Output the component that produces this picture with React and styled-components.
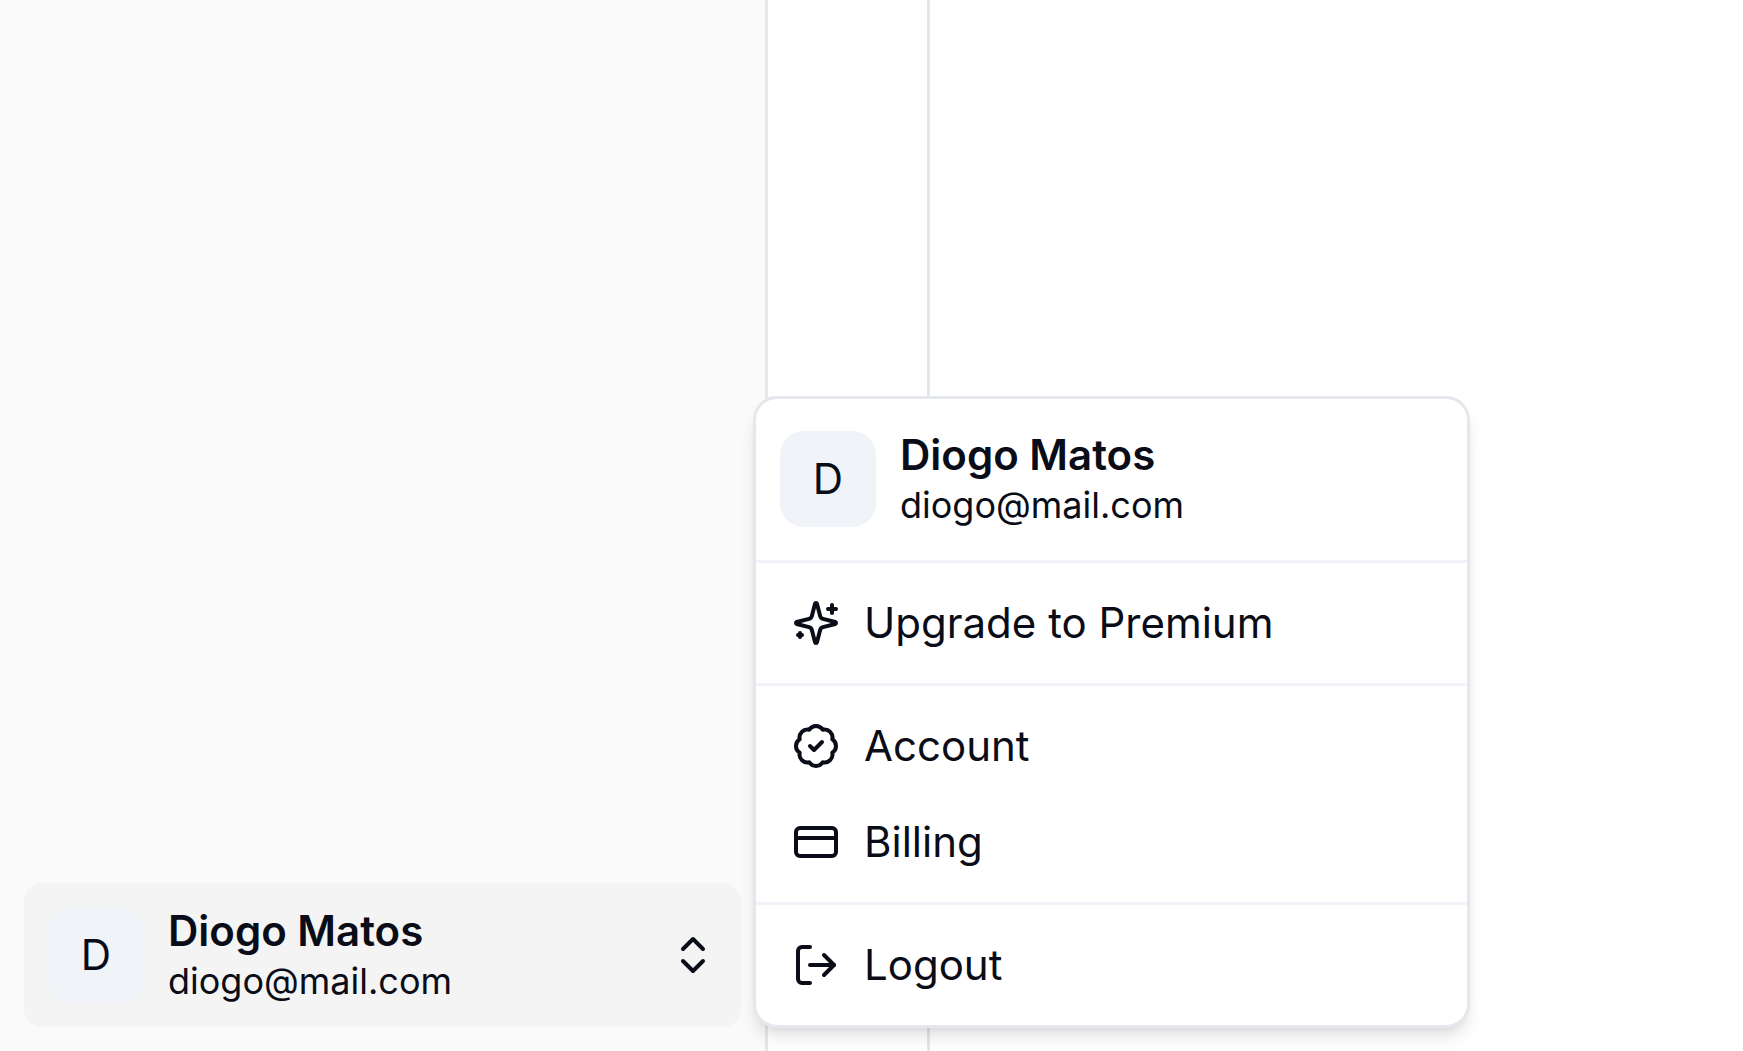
import React from "react";
import styled, { createGlobalStyle } from "styled-components";
import { BadgeCheck, ChevronsUpDown, CreditCard, LogOut } from "lucide-react";

const GlobalStyle = createGlobalStyle`
  *, *::before, *::after { box-sizing: border-box; }
  body {
    margin: 0;
    background: #ffffff;
    color: #0a0d17;
    font-family: Inter, "Liberation Sans", sans-serif;
    font-size: 42px;
    line-height: 60px;
  }
`;

const Page = styled.div`
  display: flex;
  min-height: 100vh;
`;

const Sidebar = styled.aside`
  display: flex;
  flex-direction: column;
  justify-content: flex-end;
  flex: 0 0 768px;
  padding: 24px;
  background: #fafafa;
  border-right: 3px solid #e4e7ec;
`;

const Gutter = styled.div`
  flex: 0 0 162px;
  border-right: 3px solid #e4e7ec;
`;

const Main = styled.main`
  flex: 1;
  min-width: 0;
`;

const UserArea = styled.div`
  position: relative;
`;

const UserButton = styled.button`
  display: flex;
  align-items: center;
  gap: 24px;
  width: 100%;
  height: 144px;
  padding: 24px;
  border: 0;
  border-radius: 18px;
  background: #f4f4f4;
  color: inherit;
  font: inherit;
  text-align: left;
  cursor: pointer;
`;

const Avatar = styled.span`
  display: flex;
  align-items: center;
  justify-content: center;
  flex: none;
  width: 96px;
  height: 96px;
  border-radius: 24px;
  background: #f0f4f9;
`;

const Identity = styled.span`
  display: grid;
  flex: 1;
  min-width: 0;
`;

const Name = styled.span`
  font-weight: 600;
  line-height: 52px;
`;

const Email = styled.span`
  font-size: 36px;
  line-height: 48px;
`;

const Menu = styled.div`
  position: absolute;
  left: calc(100% + 12px);
  bottom: -1px;
  z-index: 1;
  width: 100%;
  padding: 12px;
  border: 3px solid #e4e7ec;
  border-radius: 24px;
  background: #ffffff;
  box-shadow: 0 12px 18px -3px rgb(0 0 0 / 0.1), 0 6px 12px -6px rgb(0 0 0 / 0.1);
`;

const MenuHeader = styled.div`
  display: flex;
  align-items: center;
  gap: 24px;
  padding: 18px 12px 19px;
`;

const Divider = styled.hr`
  height: 3px;
  margin: 12px -12px;
  border: 0;
  background: #f0f4f9;
`;

const MenuItem = styled.button`
  display: flex;
  align-items: center;
  gap: 24px;
  width: 100%;
  padding: 18px 24px;
  border: 0;
  border-radius: 12px;
  background: transparent;
  color: inherit;
  font: inherit;
  text-align: left;
  cursor: pointer;

  svg { flex: none; }
`;

function SparklesIcon({ size }) {
  return (
    <svg
      width={size}
      height={size}
      viewBox="0 0 24 24"
      fill="none"
      stroke="currentColor"
      strokeWidth="2"
      strokeLinecap="round"
      strokeLinejoin="round"
      aria-hidden="true"
    >
      <path d="M9.937 15.5A2 2 0 0 0 8.5 14.063l-6.135-1.582a.5.5 0 0 1 0-.962L8.5 9.936A2 2 0 0 0 9.937 8.5l1.582-6.135a.5.5 0 0 1 .963 0L14.063 8.5A2 2 0 0 0 15.5 9.937l6.135 1.581a.5.5 0 0 1 0 .964L15.5 14.063a2 2 0 0 0-1.437 1.437l-1.582 6.135a.5.5 0 0 1-.963 0z" />
      <path d="M20 3v4" />
      <path d="M22 5h-4" />
      <path d="M4 17v2" />
      <path d="M5 18H3" />
    </svg>
  );
}

const groups = [
  [{ label: "Upgrade to Premium", Icon: SparklesIcon }],
  [
    { label: "Account", Icon: BadgeCheck },
    { label: "Billing", Icon: CreditCard },
  ],
  [{ label: "Logout", Icon: LogOut }],
];

const user = { name: "Diogo Matos", email: "diogo@mail.com" };

function UserSummary() {
  return (
    <>
      <Avatar>{user.name[0]}</Avatar>
      <Identity>
        <Name>{user.name}</Name>
        <Email>{user.email}</Email>
      </Identity>
    </>
  );
}

export default function App() {
  return (
    <Page>
      <GlobalStyle />
      <Sidebar>
        <UserArea>
          <UserButton type="button" aria-haspopup="menu" aria-expanded="true">
            <UserSummary />
            <ChevronsUpDown size={48} />
          </UserButton>
          <Menu role="menu">
            <MenuHeader>
              <UserSummary />
            </MenuHeader>
            {groups.map((items) => (
              <React.Fragment key={items[0].label}>
                <Divider />
                {items.map(({ label, Icon }) => (
                  <MenuItem key={label} type="button" role="menuitem">
                    <Icon size={48} />
                    {label}
                  </MenuItem>
                ))}
              </React.Fragment>
            ))}
          </Menu>
        </UserArea>
      </Sidebar>
      <Gutter />
      <Main />
    </Page>
  );
}
